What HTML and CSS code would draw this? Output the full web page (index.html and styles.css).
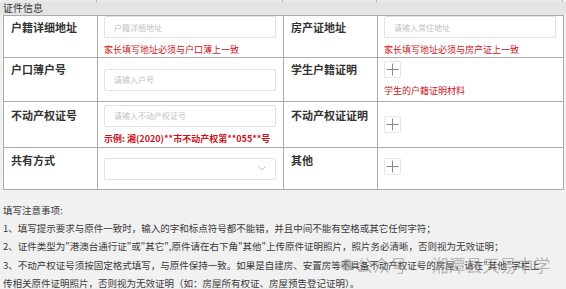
FILE: index.html
```html
<!DOCTYPE html>
<html lang="zh-CN">
<head>
    <meta charset="UTF-8">
    <meta name="viewport" content="width=device-width, initial-scale=1.0">
    <title>证件信息</title>
    <link rel="stylesheet" href="styles.css">
</head>
<body>

<div class="prev-row">
    <span class="prev-cell w-label"></span>
    <span class="prev-cell w-field"></span>
    <span class="prev-cell w-label"></span>
    <span class="prev-cell w-field"></span>
</div>
<div class="section-title">证件信息</div>

<table class="cert-table">
    <colgroup>
        <col class="w-label">
        <col class="w-field">
        <col class="w-label">
        <col class="w-field">
    </colgroup>
    <tr class="row-1">
        <th>户籍详细地址</th>
        <td>
            <input type="text" placeholder="户籍详细地址">
            <p class="hint">家长填写地址必须与户口薄上一致</p>
        </td>
        <th>房产证地址</th>
        <td>
            <input type="text" placeholder="请输入常住地址">
            <p class="hint">家长填写地址必须与房产证上一致</p>
        </td>
    </tr>
    <tr class="row-2">
        <th>户口薄户号</th>
        <td><input type="text" placeholder="请输入户号"></td>
        <th>学生户籍证明</th>
        <td>
            <div class="upload"><svg width="13" height="13" viewBox="0 0 13 13"><path d="M6.5 0.5v12M0.5 6.5h12" stroke="#8a8a8a" stroke-width="1" fill="none"/></svg></div>
            <p class="hint hint-low">学生的户籍证明材料</p>
        </td>
    </tr>
    <tr class="row-3">
        <th>不动产权证号</th>
        <td>
            <input type="text" placeholder="请输入不动产权证号">
            <p class="hint hint-bold">示例: 湘(2020)**市不动产权第**055**号</p>
        </td>
        <th>不动产权证证明</th>
        <td>
            <div class="upload"><svg width="13" height="13" viewBox="0 0 13 13"><path d="M6.5 0.5v12M0.5 6.5h12" stroke="#8a8a8a" stroke-width="1" fill="none"/></svg></div>
        </td>
    </tr>
    <tr class="row-4">
        <th>共有方式</th>
        <td>
            <div class="select">
                <svg width="8" height="5" viewBox="0 0 8 5"><path d="M0.5 0.5l3.5 3.5 3.5-3.5" stroke="#c4c4c4" stroke-width="1" fill="none"/></svg>
            </div>
        </td>
        <th>其他</th>
        <td>
            <div class="upload"><svg width="13" height="13" viewBox="0 0 13 13"><path d="M6.5 0.5v12M0.5 6.5h12" stroke="#8a8a8a" stroke-width="1" fill="none"/></svg></div>
        </td>
    </tr>
</table>

<div class="notes">
    <p>填写注意事项:</p>
    <p>1、填写提示要求与原件一致时，输入的字和标点符号都不能错，并且中间不能有空格或其它任何字符；</p>
    <p>2、证件类型为"港澳台通行证"或"其它",原件请在右下角"其他"上传原件证明照片，照片务必清晰，否则视为无效证明；</p>
    <p>3、不动产权证号须按固定格式填写，与原件保持一致。如果是自建房、安置房等不具备不动产权证号的房屋，请在"其他"字栏上传相关原件证明照片，否则视为无效证明（如：房屋所有权证、房屋预告登记证明）。</p>
    <div class="watermark"><span class="wm-icon"></span>公众号 · 湘潭县天易中学</div>
</div>

</body>
</html>
```

FILE: styles.css
```css
* {
    margin: 0;
    padding: 0;
    box-sizing: border-box;
}

body {
    font-family: "Noto Sans CJK SC", "Noto Sans", sans-serif;
    background: #f1f1f1;
    color: #333;
    width: 566px;
    overflow: hidden;
}

/* bottom of the block above */
.prev-row {
    display: flex;
    height: 2px;
    margin-left: 3px;
    width: 560px;
    background: #e9e9e9;
}

.prev-cell {
    border-right: 1px solid #b4b4b4;
}

.prev-row .w-label { width: 94px; }
.prev-row .w-field { width: 186px; }

.section-title {
    height: 13px;
    line-height: 12px;
    font-size: 10px;
    padding-left: 3px;
    background: #e4e4e4;
    color: #333;
}

.cert-table {
    margin-left: 3px;
    width: 560px;
    border-collapse: collapse;
    table-layout: fixed;
    background: #fff;
    border: 1px solid #acacac;
}

col.w-label { width: 94px; }
col.w-field { width: 186px; }

.cert-table th,
.cert-table td {
    border: 1px solid #acacac;
}

.cert-table th {
    text-align: left;
    vertical-align: top;
    font-size: 11px;
    font-weight: bold;
    color: #333;
    padding: 4px 0 0 7px;
    line-height: 14px;
}

.cert-table td {
    vertical-align: middle;
    padding: 0 6px;
}

.row-1 { height: 42px; }
.row-2 { height: 44px; }
.row-3 { height: 46px; }
.row-4 { height: 42px; }

.row-1 td { vertical-align: top; padding-top: 0; }
.row-3 th { padding-top: 6px; }
.row-4 th { padding-top: 5px; }

input {
    display: block;
    width: 172px;
    height: 22px;
    border: 1px solid #e2e2e2;
    border-radius: 2px;
    padding-left: 9px;
    font-family: inherit;
    font-size: 8px;
    outline: none;
}

input::placeholder {
    color: #c2c2c2;
}

.hint {
    font-size: 9px;
    line-height: 12px;
    color: #c8161d;
    margin-top: 6px;
}

.hint-low {
    margin-top: 7px;
}

.hint-bold {
    font-weight: bold;
    margin-top: 6px;
}

.upload {
    width: 17px;
    height: 17px;
    border: 1px solid #e6e6e6;
    border-radius: 2px;
    display: flex;
    align-items: center;
    justify-content: center;
}

.row-2 .upload {
    margin-top: -2px;
}

.row-4 .upload {
    margin-top: -4px;
}

.select {
    width: 172px;
    height: 22px;
    border: 1px solid #e2e2e2;
    border-radius: 2px;
    display: flex;
    align-items: center;
    justify-content: flex-end;
    padding-right: 9px;
}

.notes {
    position: relative;
    margin-top: 11px;
    padding: 0 18px 0 3px;
    font-size: 9.5px;
    line-height: 18.2px;
    color: #3a3a3a;
}

.watermark {
    position: absolute;
    left: 341px;
    top: 54px;
    display: flex;
    align-items: center;
    gap: 3px;
    font-size: 17px;
    line-height: 20px;
    color: rgba(130, 130, 130, 0.55);
    white-space: nowrap;
}

.wm-icon {
    width: 12px;
    height: 12px;
    border-radius: 50%;
    background: rgba(130, 130, 130, 0.5);
}
```
